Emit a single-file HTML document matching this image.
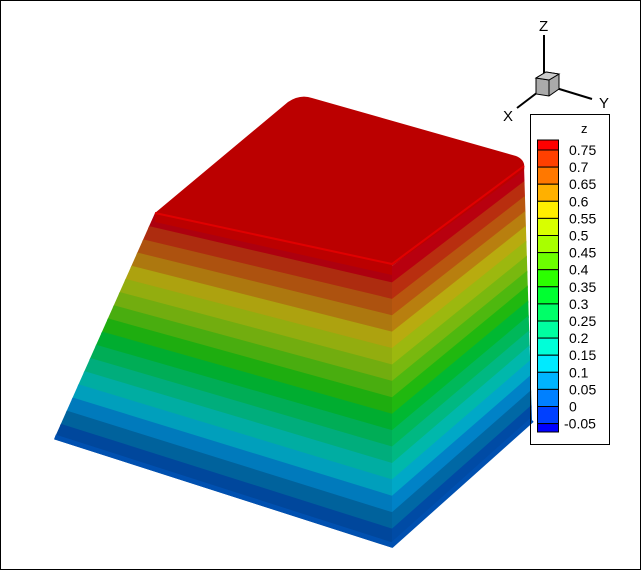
<!DOCTYPE html>
<html><head><meta charset="utf-8"><style>
html,body{margin:0;padding:0;background:#fff}
svg{display:block}
text{font-family:"Liberation Sans",sans-serif;font-size:15px;fill:#000}
</style></head><body>
<svg id="s" width="641" height="570" viewBox="0 0 641 570" xmlns="http://www.w3.org/2000/svg">
<rect x="0.5" y="0.5" width="640" height="569" fill="#fff" stroke="#000"/>
<g id="surf"></g>
<path d="M155,213 L288,102 Q300,94 312,98 L516,156 Q526,160 524,170 L392,266 L392,275 L155,222 Z" fill="#bb0000"/>
<path d="M155,213 L392,264 L524,166" fill="none" stroke="#e00000" stroke-width="2"/>
<g stroke="#000" stroke-width="2" fill="none">
<line x1="544" y1="35" x2="544" y2="78"/>
<line x1="538" y1="92" x2="517" y2="108"/>
<line x1="556" y1="88" x2="592" y2="99"/>
</g>
<path d="M536,78 L546,72 L559,74 L559,89 L549,96 L536,94 Z" fill="#aaa" stroke="#000"/>
<path d="M536,78 L549,80 L559,74 M549,80 L549,96" fill="none" stroke="#000"/>
<path d="M536,78 L549,80 L559,74 L546,72 Z" fill="#ccc" stroke="#000"/>
<text x="539" y="31">Z</text>
<text x="503" y="121">X</text>
<text x="599" y="108">Y</text>
<rect x="530.5" y="114.5" width="79" height="330" fill="none" stroke="#000"/>
<text x="581" y="133" style="font-size:13px">z</text>
<g id="bar"></g>
<g id="lab"></g>
</svg>
<script>
var leg=["#ff0000","#ff4000","#ff7800","#ffb000","#ffee00","#d8ff00","#a8ff00","#6cff00","#2cff00","#00ff30","#00ff68","#00ffa0","#00ffd8","#00eaff","#00b4ff","#0080ff","#0040ff","#0000ff"];
var NS="http://www.w3.org/2000/svg";
function el(t,a,p){var e=document.createElementNS(NS,t);for(var k in a)e.setAttribute(k,a[k]);p.appendChild(e);return e;}
function sh(c,f){var r=parseInt(c.substr(1,2),16),g=parseInt(c.substr(3,2),16),b=parseInt(c.substr(5,2),16);return "rgb("+Math.round(r*f)+","+Math.round(g*f)+","+Math.round(b*f+15)+")";}
var bar=document.getElementById("bar"),lab=document.getElementById("lab");
var bounds=[140];for(var i=0;i<17;i++)bounds.push(150+i*17.1);bounds.push(432);
for(var i=0;i<18;i++){el("rect",{x:537.5,y:bounds[i],width:21,height:bounds[i+1]-bounds[i],fill:leg[i],stroke:"#000","stroke-width":1},bar);}
var labs=["0.75","0.7","0.65","0.6","0.55","0.5","0.45","0.4","0.35","0.3","0.25","0.2","0.15","0.1","0.05","0","-0.05"];
for(var i=0;i<17;i++){var t=el("text",{x:labs[i][0]=="-"?564:569,y:bounds[i+1]+5,style:"font-size:14px"},lab);t.textContent=labs[i];}
var surf=document.getElementById("surf");
function face(t0,t1,b0,b1,f){
 var n=17;
 for(var i=0;i<n;i++){
  var a=i/n,b=(i+1)/n;
  function L(p,q,s){return [p[0]+(q[0]-p[0])*s,p[1]+(q[1]-p[1])*s];}
  var p1=L(t0,b0,a),p2=L(t1,b1,a),p3=L(t1,b1,b+0.01),p4=L(t0,b0,b+0.01);
  var c=leg[i]; if(i>=15) c=["#0090d0","#0068d0"][i-15]||c;
  el("polygon",{points:[p1,p2,p3,p4].map(function(p){return p.join(",")}).join(" "),fill:sh(c,f)},surf);
 }
}
face([155,213],[392,266],[55,437],[392,545],0.68);
face([392,266],[524,166],[392,545],[532,420],0.72);
el("polyline",{points:"55,437 392,545 532,420",fill:"none",stroke:"#0050b0","stroke-width":5},surf);
</script>
</body></html>
